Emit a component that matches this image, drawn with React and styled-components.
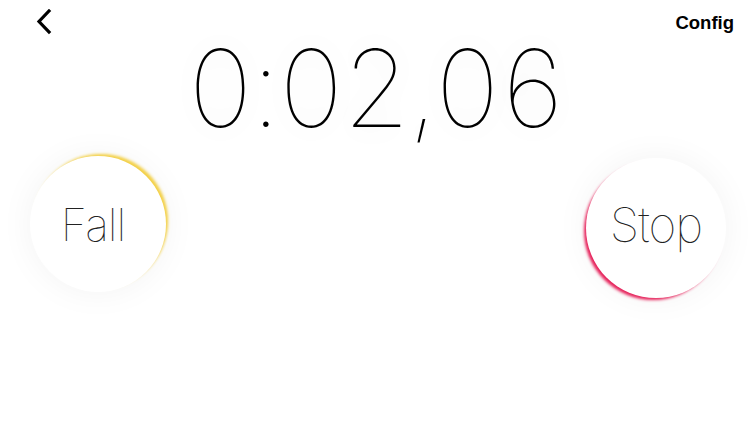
import React from 'react';
import styled, { createGlobalStyle } from 'styled-components';

const Global = createGlobalStyle`
  html, body { margin: 0; padding: 0; background: #fff; }
  body { font-family: "Inter", "Liberation Sans", sans-serif; }
`;

const Screen = styled.div`
  width: 750px;
  height: 423px;
  background: #fff;
  overflow: hidden;
  display: flex;
  flex-direction: column;
`;

const TopBar = styled.div`
  display: flex;
  justify-content: space-between;
  align-items: flex-start;
  padding: 9px 16px 0 34px;
  height: 30px;
`;

const BackButton = styled.button`
  border: 0;
  background: none;
  padding: 0;
  width: 22px;
  height: 26px;
  cursor: pointer;
`;

const ConfigButton = styled.button`
  border: 0;
  background: none;
  padding: 0;
  margin-top: 3px;
  font-family: "Liberation Sans", Arial, sans-serif;
  font-weight: 700;
  font-size: 18.5px;
  color: #000;
  cursor: pointer;
`;

const Timer = styled.div`
  align-self: center;
  margin-top: -4px;
  font-family: "Inter", "Roboto", sans-serif;
  font-weight: 100;
  font-size: 107px;
  line-height: 1;
  color: #000;
  letter-spacing: -3.5px;
  font-variant-numeric: tabular-nums;
  text-shadow: 0 0 30px rgba(0, 0, 0, 0.1);
`;

const ButtonRow = styled.div`
  display: flex;
  justify-content: space-between;
  align-items: flex-start;
  padding: 0 24px 0 30px;
  margin-top: 14px;
`;

const Round = styled.button`
  width: ${p => p.size}px;
  height: ${p => p.size}px;
  margin-top: ${p => p.offset || 0}px;
  border-radius: 50%;
  border: 0;
  background: #fff;
  display: flex;
  align-items: center;
  justify-content: center;
  padding: 0 ${p => p.shiftX || 0}px ${p => p.shiftY || 0}px 0;
  font-family: "Inter", "Roboto", sans-serif;
  font-weight: 100;
  font-size: ${p => p.fontSize}px;
  letter-spacing: -1px;
  color: #222;
  box-shadow: ${p => p.edge}, 0 0 34px rgba(0, 0, 0, 0.05);
  cursor: pointer;
`;

export default function App() {
  return (
    <Screen>
      <Global />
      <TopBar>
        <BackButton aria-label="Back">
          <svg width="22" height="26" viewBox="0 0 22 26">
            <path d="M15 2 L5 12.5 L15 23" fill="none" stroke="#000" strokeWidth="3.2" strokeLinecap="square" />
          </svg>
        </BackButton>
        <ConfigButton>Config</ConfigButton>
      </TopBar>
      <Timer>0:02,06</Timer>
      <ButtonRow>
        <Round size={136} offset={0} shiftX={10} fontSize={45} edge="3px -3px 3px -1px #f3d046">Fall</Round>
        <Round size={140} offset={2} shiftY={8} fontSize={48} edge="-3px 3px 3px -1px #e6215a">Stop</Round>
      </ButtonRow>
    </Screen>
  );
}
